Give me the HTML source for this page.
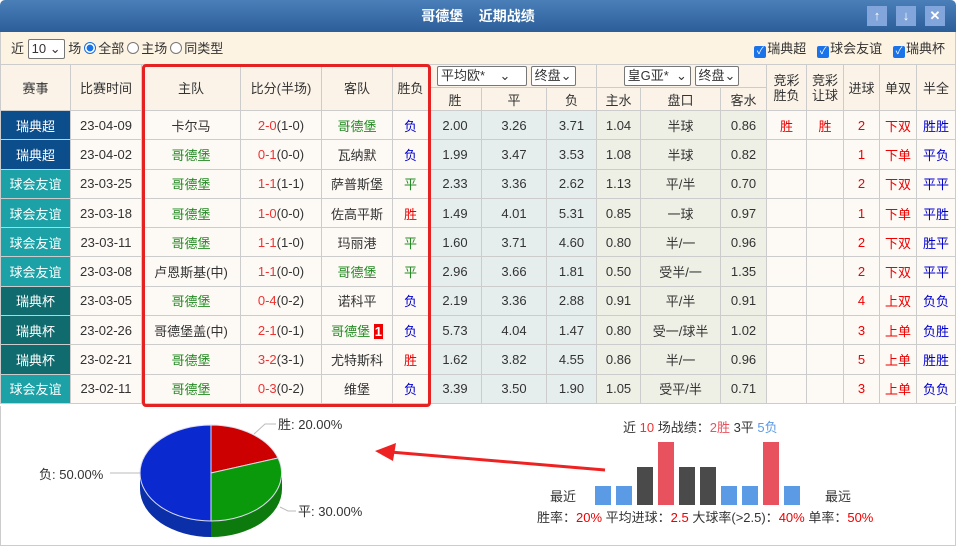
<!DOCTYPE html>
<html><head><meta charset="utf-8">
<style>
*{margin:0;padding:0;box-sizing:border-box}
body{width:956px;height:546px;overflow:hidden;background:#fff;font-family:"Liberation Sans","Noto Sans CJK SC",sans-serif;font-size:13px;color:#333;position:relative}
#title{position:absolute;left:0;top:0;width:956px;height:32px;background:linear-gradient(#4a7fb8,#2c5f99);border-radius:5px 5px 0 0;color:#fff;font-weight:bold;font-size:14px;text-align:center;line-height:32px}
.btn{position:absolute;top:6px;width:20px;height:20px;background:#82a6dc;color:#fff;font-size:13px;text-align:center;line-height:20px;font-weight:bold}
#filter{position:absolute;left:0;top:32px;width:956px;height:32px;background:#fdf3e2;border-left:1px solid #ccc;border-right:1px solid #ccc}
.sel{display:inline-block;border:1px solid #777;background:#fff;height:20px;line-height:18px;padding:0 3px;font-size:13px;border-radius:2px}
.rad{display:inline-block;width:12px;height:12px;border:1px solid #777;border-radius:50%;vertical-align:-1px;background:#fff;margin:0 2px 0 3px}
.radon{border:1px solid #1a6fd6;background:radial-gradient(#1a73e8 45%,#fff 50%)}
.cb{display:inline-block;width:12px;height:12px;background:#1a73e8;border-radius:2px;color:#fff;font-size:10px;line-height:12px;text-align:center;vertical-align:-1px;margin-right:1px}
table{position:absolute;left:0;top:64px;border-collapse:collapse;table-layout:fixed;width:955px}
td{border:1px solid #ccc;text-align:center;height:29.3px;white-space:nowrap;overflow:hidden;background:#fdf9f5;font-size:13px}
tr.h td{height:23px;background:#fbf3e8}
.c1{background:#0c4d8c !important;color:#fff}.c2{background:#1ba1a6 !important;color:#fff}.c3{background:#0f6b6e !important;color:#fff}
.o{background:#e5eded !important}.a{background:#eef0e5 !important}
.g{color:#228b22}.r{color:#e00}.b{color:#00c}.rr{color:#e33}.bb{color:#00c}
</style></head><body>
<div id="title">哥德堡&nbsp;&nbsp;&nbsp;&nbsp;近期战绩</div>
<div class="btn" style="left:867px">↑</div><div class="btn" style="left:896px">↓</div><div class="btn" style="left:925px">✕</div>
<div id="filter">
<div style="position:absolute;left:10px;top:6px">近 <span class="sel">10 ⌄</span> 场<span class="rad radon"></span>全部<span class="rad"></span>主场<span class="rad"></span>同类型</div>
<div style="position:absolute;right:10px;top:6px"><span class="cb">✓</span>瑞典超&nbsp;&nbsp; <span class="cb">✓</span>球会友谊&nbsp;&nbsp; <span class="cb">✓</span>瑞典杯</div>
</div>
<table>
<colgroup><col style="width:70px"><col style="width:71px"><col style="width:99px"><col style="width:81px"><col style="width:71px"><col style="width:36px"><col style="width:53px"><col style="width:65px"><col style="width:50px"><col style="width:44px"><col style="width:80px"><col style="width:46px"><col style="width:40px"><col style="width:37px"><col style="width:36px"><col style="width:37px"><col style="width:39px"></colgroup>
<tr class="h"><td rowspan="2">赛事</td><td rowspan="2">比赛时间</td><td rowspan="2">主队</td><td rowspan="2">比分(半场)</td><td rowspan="2">客队</td><td rowspan="2">胜负</td><td colspan="3" style="text-align:left;padding-left:8px"><span class="sel" style="width:90px">平均欧* &nbsp;&nbsp;&nbsp;⌄</span> <span class="sel">终盘⌄</span></td><td colspan="3"><span class="sel">皇G亚* &nbsp;⌄</span> <span class="sel">终盘⌄</span></td><td rowspan="2" style="line-height:15px">竞彩<br>胜负</td><td rowspan="2" style="line-height:15px">竞彩<br>让球</td><td rowspan="2">进球</td><td rowspan="2">单双</td><td rowspan="2">半全</td></tr>
<tr class="h"><td>胜</td><td>平</td><td>负</td><td>主水</td><td>盘口</td><td>客水</td></tr>
<tr><td class="c1">瑞典超</td><td>23-04-09</td><td>卡尔马</td><td><span class="rr">2-0</span>(1-0)</td><td class="g">哥德堡</td><td class="b">负</td><td class="o">2.00</td><td class="o">3.26</td><td class="o">3.71</td><td class="a">1.04</td><td class="a">半球</td><td class="a">0.86</td><td class="r">胜</td><td class="r">胜</td><td class="r">2</td><td class="r">下双</td><td class="bb">胜胜</td></tr>
<tr><td class="c1">瑞典超</td><td>23-04-02</td><td class="g">哥德堡</td><td><span class="rr">0-1</span>(0-0)</td><td>瓦纳默</td><td class="b">负</td><td class="o">1.99</td><td class="o">3.47</td><td class="o">3.53</td><td class="a">1.08</td><td class="a">半球</td><td class="a">0.82</td><td></td><td></td><td class="r">1</td><td class="r">下单</td><td class="bb">平负</td></tr>
<tr><td class="c2">球会友谊</td><td>23-03-25</td><td class="g">哥德堡</td><td><span class="rr">1-1</span>(1-1)</td><td>萨普斯堡</td><td class="g">平</td><td class="o">2.33</td><td class="o">3.36</td><td class="o">2.62</td><td class="a">1.13</td><td class="a">平/半</td><td class="a">0.70</td><td></td><td></td><td class="r">2</td><td class="r">下双</td><td class="bb">平平</td></tr>
<tr><td class="c2">球会友谊</td><td>23-03-18</td><td class="g">哥德堡</td><td><span class="rr">1-0</span>(0-0)</td><td>佐高平斯</td><td class="r">胜</td><td class="o">1.49</td><td class="o">4.01</td><td class="o">5.31</td><td class="a">0.85</td><td class="a">一球</td><td class="a">0.97</td><td></td><td></td><td class="r">1</td><td class="r">下单</td><td class="bb">平胜</td></tr>
<tr><td class="c2">球会友谊</td><td>23-03-11</td><td class="g">哥德堡</td><td><span class="rr">1-1</span>(1-0)</td><td>玛丽港</td><td class="g">平</td><td class="o">1.60</td><td class="o">3.71</td><td class="o">4.60</td><td class="a">0.80</td><td class="a">半/一</td><td class="a">0.96</td><td></td><td></td><td class="r">2</td><td class="r">下双</td><td class="bb">胜平</td></tr>
<tr><td class="c2">球会友谊</td><td>23-03-08</td><td>卢恩斯基(中)</td><td><span class="rr">1-1</span>(0-0)</td><td class="g">哥德堡</td><td class="g">平</td><td class="o">2.96</td><td class="o">3.66</td><td class="o">1.81</td><td class="a">0.50</td><td class="a">受半/一</td><td class="a">1.35</td><td></td><td></td><td class="r">2</td><td class="r">下双</td><td class="bb">平平</td></tr>
<tr><td class="c3">瑞典杯</td><td>23-03-05</td><td class="g">哥德堡</td><td><span class="rr">0-4</span>(0-2)</td><td>诺科平</td><td class="b">负</td><td class="o">2.19</td><td class="o">3.36</td><td class="o">2.88</td><td class="a">0.91</td><td class="a">平/半</td><td class="a">0.91</td><td></td><td></td><td class="r">4</td><td class="r">上双</td><td class="bb">负负</td></tr>
<tr><td class="c3">瑞典杯</td><td>23-02-26</td><td>哥德堡盖(中)</td><td><span class="rr">2-1</span>(0-1)</td><td class="g">哥德堡 <span style="background:#e00;color:#fff;font-weight:bold;padding:0 1px">1</span></td><td class="b">负</td><td class="o">5.73</td><td class="o">4.04</td><td class="o">1.47</td><td class="a">0.80</td><td class="a">受一/球半</td><td class="a">1.02</td><td></td><td></td><td class="r">3</td><td class="r">上单</td><td class="bb">负胜</td></tr>
<tr><td class="c3">瑞典杯</td><td>23-02-21</td><td class="g">哥德堡</td><td><span class="rr">3-2</span>(3-1)</td><td>尤特斯科</td><td class="r">胜</td><td class="o">1.62</td><td class="o">3.82</td><td class="o">4.55</td><td class="a">0.86</td><td class="a">半/一</td><td class="a">0.96</td><td></td><td></td><td class="r">5</td><td class="r">上单</td><td class="bb">胜胜</td></tr>
<tr><td class="c2">球会友谊</td><td>23-02-11</td><td class="g">哥德堡</td><td><span class="rr">0-3</span>(0-2)</td><td>维堡</td><td class="b">负</td><td class="o">3.39</td><td class="o">3.50</td><td class="o">1.90</td><td class="a">1.05</td><td class="a">受平/半</td><td class="a">0.71</td><td></td><td></td><td class="r">3</td><td class="r">上单</td><td class="bb">负负</td></tr>
</table>
<div style="position:absolute;left:142px;top:64px;width:289px;height:343px;border:3px solid #e52222;border-radius:4px"></div>
<div style="position:absolute;left:0;top:406px;width:956px;height:140px;border:1px solid #ccc;border-top:none"></div>
<svg style="position:absolute;left:0;top:0" width="956" height="546">
<path d="M140 473 L140 489 A71 48 0 0 0 211 537 L211 521 A71 48 0 0 1 140 473Z" fill="#0a2fa8"/>
<path d="M211 521 L211 537 A71 48 0 0 0 282 489 L282 473 A71 48 0 0 1 211 521Z" fill="#0d7a0d"/>
<path d="M211 473 L211 425 A71 48 0 0 0 211 521Z" fill="#0a2ad0" stroke="#dde" stroke-width="1"/>
<path d="M211 473 L211 425 A71 48 0 0 1 278 458Z" fill="#cc0000" stroke="#dde" stroke-width="1"/>
<path d="M211 473 L278 458 A71 48 0 0 1 211 521Z" fill="#0a990a" stroke="#dde" stroke-width="1"/>
<polyline points="254,434 265,424 276,424" fill="none" stroke="#bbb"/>
<polyline points="280,507 288,511 296,511" fill="none" stroke="#bbb"/>
<line x1="110" y1="473" x2="140" y2="473" stroke="#bbb"/>
<g font-family="Liberation Sans,Noto Sans CJK SC,sans-serif" font-size="13" fill="#333">
<text x="278" y="429">胜: 20.00%</text>
<text x="298" y="516">平: 30.00%</text>
<text x="39" y="479">负: 50.00%</text>
</g>
<line x1="605" y1="470" x2="390" y2="452" stroke="#ee2222" stroke-width="3"/>
<polygon points="375,451 396,443 393,461" fill="#ee2222"/>
<g>
<rect x="595" y="486" width="16" height="19" fill="#5b9be6"/>
<rect x="616" y="486" width="16" height="19" fill="#5b9be6"/>
<rect x="637" y="467" width="16" height="38" fill="#4a4a4a"/>
<rect x="658" y="442" width="16" height="63" fill="#e8525e"/>
<rect x="679" y="467" width="16" height="38" fill="#4a4a4a"/>
<rect x="700" y="467" width="16" height="38" fill="#4a4a4a"/>
<rect x="721" y="486" width="16" height="19" fill="#5b9be6"/>
<rect x="742" y="486" width="16" height="19" fill="#5b9be6"/>
<rect x="763" y="442" width="16" height="63" fill="#e8525e"/>
<rect x="784" y="486" width="16" height="19" fill="#5b9be6"/>
</g>
<g font-family="Liberation Sans,Noto Sans CJK SC,sans-serif" font-size="13" fill="#333">
<text x="623" y="432">近 <tspan fill="#e33">10</tspan> 场战绩：<tspan fill="#e8525e">2胜</tspan> 3平 <tspan fill="#5b9be6">5负</tspan></text>
<text x="550" y="501">最近</text>
<text x="825" y="501">最远</text>
<text x="537" y="522">胜率：<tspan fill="#e00">20%</tspan> 平均进球：<tspan fill="#e00">2.5</tspan> 大球率(&gt;2.5)：<tspan fill="#e00">40%</tspan> 单率：<tspan fill="#e00">50%</tspan></text>
</g>
</svg>
</body></html>
